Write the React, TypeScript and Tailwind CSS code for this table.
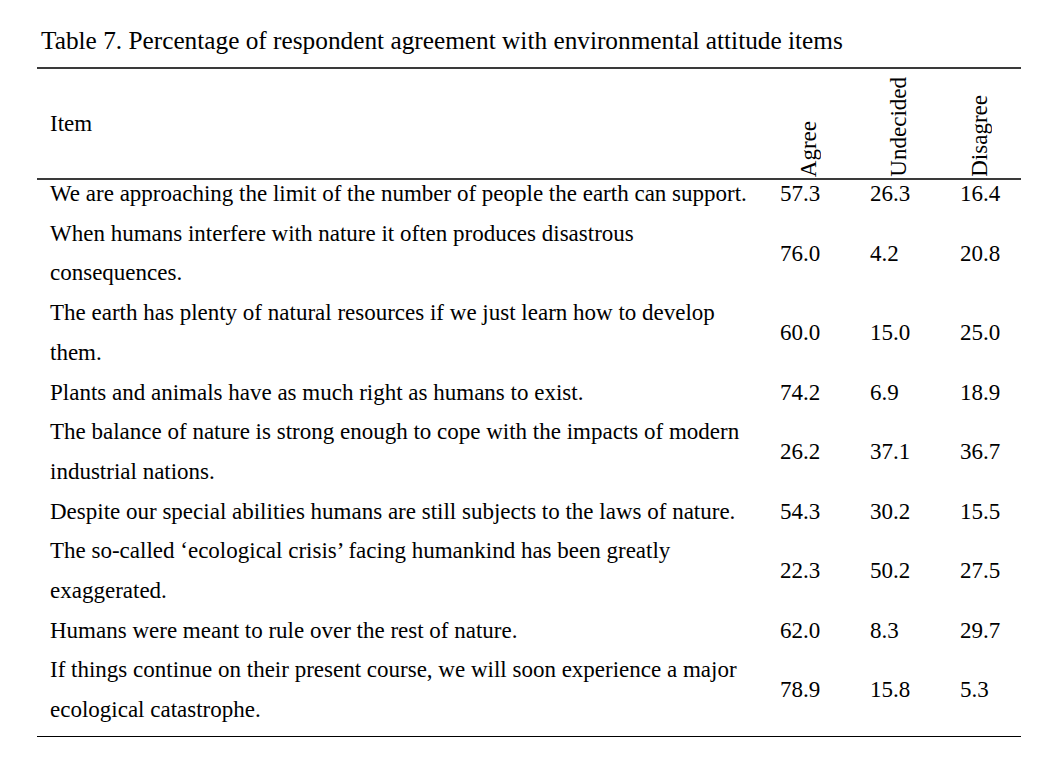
import React from "react";

const rows: { lines: string[]; a: string; u: string; d: string }[] = [
  { lines: ["We are approaching the limit of the number of people the earth can support."], a: "57.3", u: "26.3", d: "16.4" },
  { lines: ["When humans interfere with nature it often produces disastrous", "consequences."], a: "76.0", u: "4.2", d: "20.8" },
  { lines: ["The earth has plenty of natural resources if we just learn how to develop", "them."], a: "60.0", u: "15.0", d: "25.0" },
  { lines: ["Plants and animals have as much right as humans to exist."], a: "74.2", u: "6.9", d: "18.9" },
  { lines: ["The balance of nature is strong enough to cope with the impacts of modern", "industrial nations."], a: "26.2", u: "37.1", d: "36.7" },
  { lines: ["Despite our special abilities humans are still subjects to the laws of nature."], a: "54.3", u: "30.2", d: "15.5" },
  { lines: ["The so-called \u2018ecological crisis\u2019 facing humankind has been greatly", "exaggerated."], a: "22.3", u: "50.2", d: "27.5" },
  { lines: ["Humans were meant to rule over the rest of nature."], a: "62.0", u: "8.3", d: "29.7" },
  { lines: ["If things continue on their present course, we will soon experience a major", "ecological catastrophe."], a: "78.9", u: "15.8", d: "5.3" },
];

export default function App() {
  return (
    <div className="w-[1056px] h-[782px] bg-white text-black font-['Liberation_Serif',serif] pt-[24px]">
      <div className="pl-[41px] text-[25.3px] leading-[32px]">
        Table 7. Percentage of respondent agreement with environmental attitude items
      </div>
      <div className="ml-[37px] w-[984px] mt-[11px] border-t-2 border-[#3a3a3a]">
        {/* header */}
        <div className="flex h-[111px] border-b-2 border-[#3a3a3a] text-[23px]">
          <div className="w-[733px] flex items-center pl-[13px] pt-[2px]">Item</div>
          <div className="w-[90px] flex items-end pl-[28px] pb-[1px]">
            <span className="[writing-mode:vertical-rl] rotate-180 leading-[22px]">Agree</span>
          </div>
          <div className="w-[90px] flex items-end pl-[28px] pb-[1px]">
            <span className="[writing-mode:vertical-rl] rotate-180 leading-[22px]">Undecided</span>
          </div>
          <div className="w-[71px] flex items-end pl-[19px] pb-[1px]">
            <span className="[writing-mode:vertical-rl] rotate-180 leading-[22px]">Disagree</span>
          </div>
        </div>
        {/* body */}
        <div className="flex flex-col -mt-[6px] pb-[6px] border-b border-black text-[23px] leading-[39.7px]">
          {rows.map((r, i) => (
            <div key={i} className="flex">
              <div className="w-[733px] pl-[13px]">
                {r.lines.map((l, j) => (
                  <div key={j}>{l}</div>
                ))}
              </div>
              <div className="w-[90px] pl-[10px] flex items-center">{r.a}</div>
              <div className="w-[90px] pl-[10px] flex items-center">{r.u}</div>
              <div className="w-[71px] pl-[10px] flex items-center">{r.d}</div>
            </div>
          ))}
        </div>
      </div>
    </div>
  );
}
